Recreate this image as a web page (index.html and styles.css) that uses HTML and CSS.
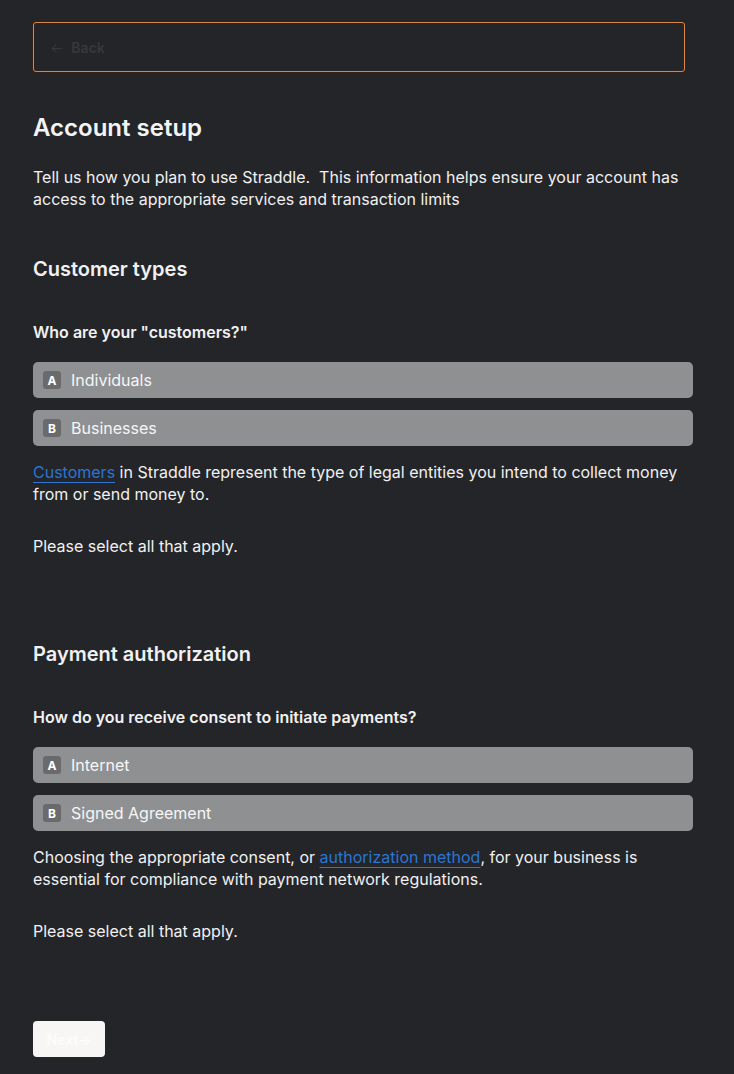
FILE: index.html
```html
<!DOCTYPE html>
<html>
<head>
<meta charset="utf-8">
<link rel="stylesheet" href="styles.css">
</head>
<body>
<main class="page">
  <button class="back"><span class="back-arrow">←</span> Back</button>
  <h1 class="title">Account setup</h1>
  <p class="intro">Tell us how you plan to use Straddle.&nbsp; This information helps ensure your account has access to the appropriate services and transaction limits</p>

  <section class="section">
    <h2 class="section-title">Customer types</h2>
    <p class="question">Who are your "customers?"</p>
    <div class="options">
      <div class="option"><span class="badge">A</span><span>Individuals</span></div>
      <div class="option"><span class="badge">B</span><span>Businesses</span></div>
    </div>
    <p class="help"><a class="link" href="#">Customers</a> in Straddle represent the type of legal entities you intend to collect money from or send money to.</p>
    <p class="note">Please select all that apply.</p>
  </section>

  <section class="section second">
    <h2 class="section-title">Payment authorization</h2>
    <p class="question">How do you receive consent to initiate payments?</p>
    <div class="options">
      <div class="option"><span class="badge">A</span><span>Internet</span></div>
      <div class="option"><span class="badge">B</span><span>Signed Agreement</span></div>
    </div>
    <p class="help">Choosing the appropriate consent, or <a class="link" href="#">authorization method</a>, for your business is essential for compliance with payment network regulations.</p>
    <p class="note">Please select all that apply.</p>
  </section>

  <button class="next">Next→</button>
</main>
</body>
</html>
```
FILE: styles.css
```css
html, body {
  margin: 0;
  padding: 0;
  background: #242529;
}
body {
  font-family: Inter, "Noto Sans", sans-serif;
  color: #f1f1f2;
}
.page {
  width: 660px;
  padding: 22px 0 40px 33px;
  display: flex;
  flex-direction: column;
  align-items: flex-start;
}
.back {
  width: 652px;
  height: 50px;
  box-sizing: border-box;
  border: 1px solid #d8874b;
  box-shadow: 0 0 0 1px #3a1f10;
  border-radius: 3px;
  background: #242529;
  color: #37383b;
  font-family: Inter, sans-serif;
  font-size: 14px;
  font-weight: 600;
  text-align: left;
  padding: 0 0 0 16px;
  display: flex;
  align-items: center;
  gap: 8px;
}
.back-arrow {
  font-weight: 400;
}
.title {
  margin: 40px 0 0;
  font-size: 24px;
  line-height: 32px;
  font-weight: 600;
  color: #f4f4f5;
}
.intro {
  margin: 22px 0 0;
  font-size: 16px;
  line-height: 22px;
}
.section {
  align-self: stretch;
  margin-top: 45px;
}
.section.second {
  margin-top: 83px;
}
.section-title {
  margin: 0;
  font-size: 20px;
  line-height: 28px;
  font-weight: 600;
}
.question {
  margin: 38px 0 0;
  font-size: 16px;
  line-height: 22px;
  font-weight: 600;
}
.options {
  margin-top: 19px;
  display: flex;
  flex-direction: column;
  gap: 12px;
}
.option {
  height: 36px;
  box-sizing: border-box;
  background: #8f9092;
  border-radius: 5px;
  display: flex;
  align-items: center;
  gap: 10px;
  padding-left: 10px;
  font-size: 16px;
  color: #f6f6f6;
}
.badge {
  width: 18px;
  height: 18px;
  border-radius: 3px;
  background: #6a6a6c;
  color: #ffffff;
  font-size: 12px;
  font-weight: 700;
  display: flex;
  align-items: center;
  justify-content: center;
}
.help {
  margin: 15px 0 0;
  font-size: 16px;
  line-height: 22px;
}
.link {
  color: #2a76d2;
  text-decoration: underline;
  text-underline-offset: 4px;
  text-decoration-thickness: 1px;
}
.note {
  margin: 30px 0 0;
  font-size: 16px;
  line-height: 22px;
}
.next {
  margin-top: 79px;
  width: 72px;
  height: 36px;
  border: none;
  border-radius: 4px;
  background: #f8f6f5;
  color: #fdfcfb;
  font-family: Inter, sans-serif;
  font-size: 14px;
  font-weight: 600;
  padding: 0;
}
```
